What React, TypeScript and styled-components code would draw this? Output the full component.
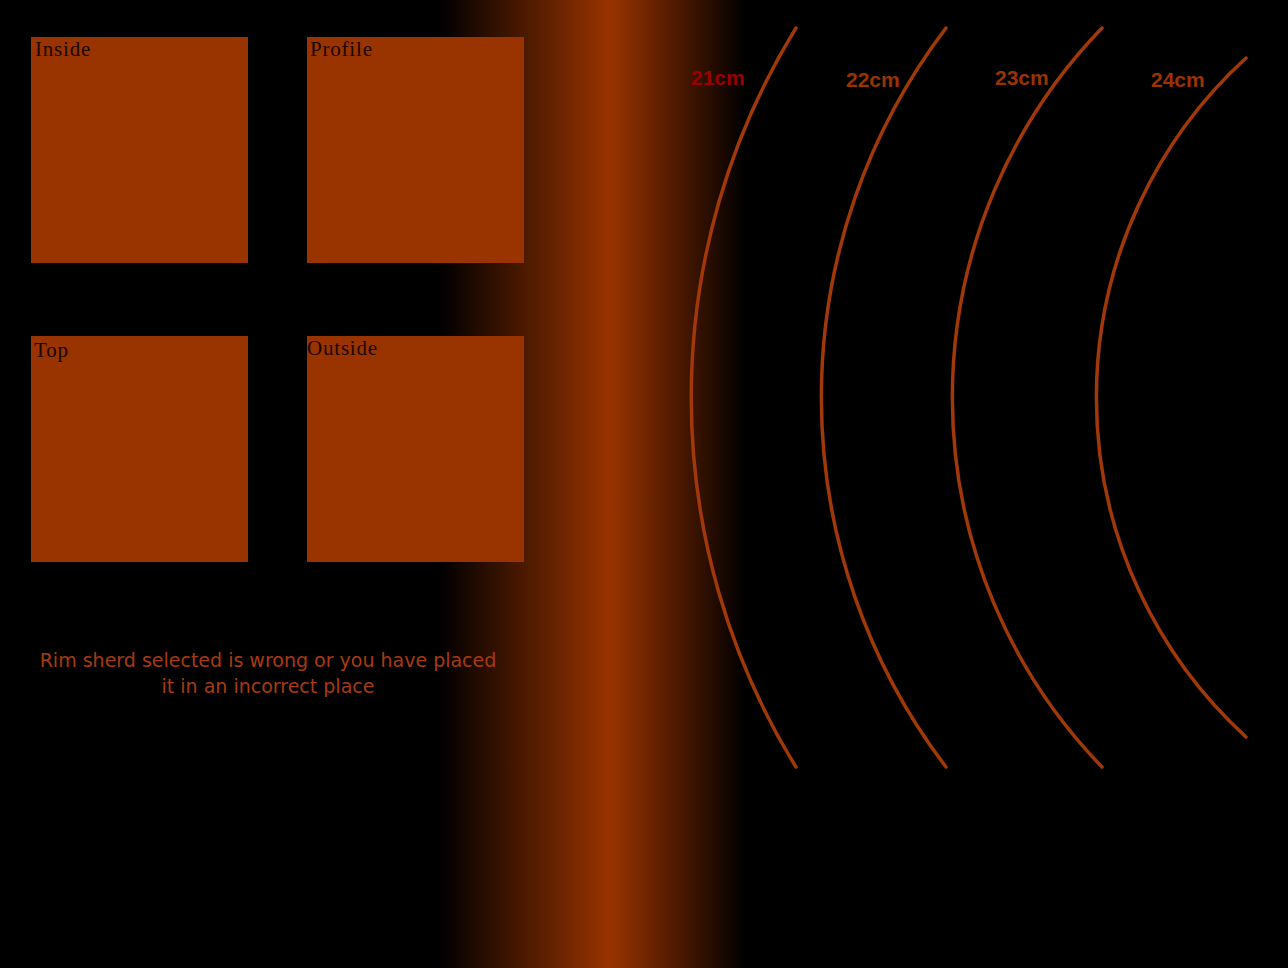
import React from "react"
import styled, { createGlobalStyle } from "styled-components"

const GlobalStyle = createGlobalStyle`
	html, body {
		margin: 0;
		padding: 0;
		height: 100%;
	}
	body {
		background: linear-gradient(to right, #000 440px, #993300 610px, #000 745px);
		background-color: #000;
		min-height: 968px;
		overflow: hidden;
	}
`

interface Sherd {
	label: string
	top: number
	bottom: number
	left: number
	radius: number
	labelX: number
	labelY: number
	color: string
}

const sherds: Sherd[] = [
	{ label: "21cm", top: 28, bottom: 767, left: 796, radius: 704, labelX: 691, labelY: 85, color: "#990000" },
	{ label: "22cm", top: 28, bottom: 767, left: 946, radius: 610, labelX: 846, labelY: 87, color: "#993300" },
	{ label: "23cm", top: 28, bottom: 767, left: 1102, radius: 531, labelX: 995, labelY: 85, color: "#993300" },
	{ label: "24cm", top: 58, bottom: 737, left: 1246, radius: 460, labelX: 1151, labelY: 87, color: "#993300" },
]

const views = [
	{ name: "Inside", inset: 4, drop: 0 },
	{ name: "Profile", inset: 3, drop: 0 },
	{ name: "Top", inset: 3, drop: 2 },
	{ name: "Outside", inset: 0, drop: 0 },
]

export default function App() {
	return (
		<>
			<GlobalStyle />
			<Page>
				<LeftPanel>
					<Grid>
						{views.map((v) => (
							<DropBox key={v.name} inset={v.inset} drop={v.drop}>
								<BoxLabel>{v.name}</BoxLabel>
							</DropBox>
						))}
					</Grid>
					<Message>
						Rim sherd selected is wrong or you have placed
						<br />
						it in an incorrect place
					</Message>
				</LeftPanel>
				<Chart viewBox="660 0 628 800" width={628} height={800}>
					{sherds.map((s) => (
						<g key={s.label}>
							<path
								d={`M ${s.left} ${s.top} A ${s.radius} ${s.radius} 0 0 0 ${s.left} ${s.bottom}`}
								fill="none"
								stroke="#a13808"
								strokeWidth={3.5}
								strokeLinecap="round"
							/>
							<text
								x={s.labelX}
								y={s.labelY}
								fill={s.color}
								fontFamily="'Liberation Sans', Arial, sans-serif"
								fontWeight="bold"
								fontSize={21}
							>
								{s.label}
							</text>
						</g>
					))}
				</Chart>
			</Page>
		</>
	)
}

const Page = styled.div`
	display: flex;
	flex-direction: row;
	align-items: flex-start;
	width: 1288px;
	height: 968px;
`

const LeftPanel = styled.div`
	width: 536px;
	display: flex;
	flex-direction: column;
	padding-top: 37px;
`

const Grid = styled.div`
	display: grid;
	grid-template-columns: 217px 217px;
	grid-template-rows: 226px 226px;
	column-gap: 59px;
	row-gap: 73px;
	margin-left: 31px;
`

interface BoxProps {
	inset: number
	drop: number
}

const DropBox = styled.div<BoxProps>`
	background: #993300;
	padding-top: ${(p) => p.drop}px;
	padding-left: ${(p) => p.inset}px;
	box-sizing: border-box;
	line-height: 24px;
`

const BoxLabel = styled.span`
	font-family: "Liberation Serif", "Times New Roman", serif;
	font-size: 21px;
	letter-spacing: 0.8px;
	color: #1a0800;
`

const Message = styled.div`
	margin-top: 85px;
	text-align: center;
	font-family: "DejaVu Sans", Verdana, sans-serif;
	font-size: 19px;
	line-height: 26px;
	color: #a83a10;
`

const Chart = styled.svg`
	display: block;
	margin-left: 124px;
	flex-shrink: 0;
`
